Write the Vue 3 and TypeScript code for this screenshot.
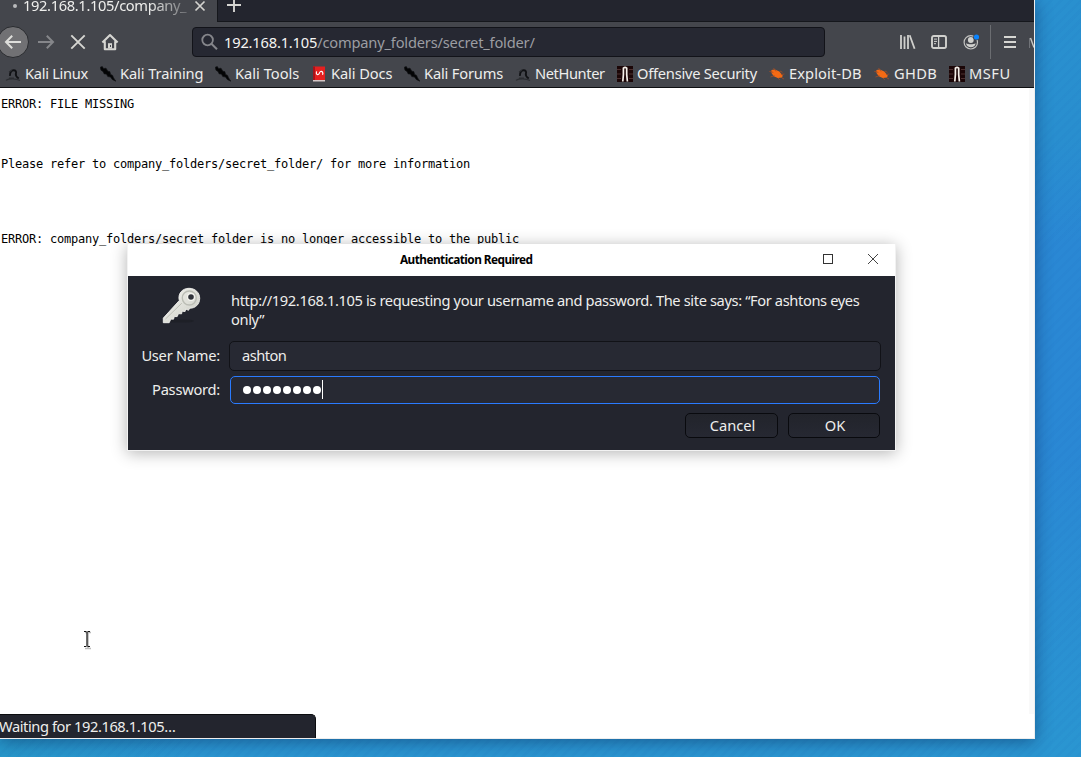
<script setup lang="ts">
interface Bookmark {
  label: string
  icon: 'dragon' | 'knife' | 'docs' | 'offsec' | 'bug'
  width: number
  tracking: number
}

const bookmarks: Bookmark[] = [
  { label: 'Kali Linux', icon: 'dragon', width: 95, tracking: -0.3 },
  { label: 'Kali Training', icon: 'knife', width: 115, tracking: -0.1 },
  { label: 'Kali Tools', icon: 'knife', width: 96, tracking: 0 },
  { label: 'Kali Docs', icon: 'docs', width: 93, tracking: -0.1 },
  { label: 'Kali Forums', icon: 'knife', width: 111, tracking: -0.18 },
  { label: 'NetHunter', icon: 'dragon', width: 102, tracking: -0.4 },
  { label: 'Offensive Security', icon: 'offsec', width: 152, tracking: -0.24 },
  { label: 'Exploit-DB', icon: 'bug', width: 105, tracking: 0.1 },
  { label: 'GHDB', icon: 'bug', width: 75, tracking: 0.3 },
  { label: 'MSFU', icon: 'offsec', width: 70, tracking: 0.5 },
]
const passwordLength = 8
</script>

<template>
  <div class="desktop">
    <div class="browser">
      <div class="tabs">
        <div class="tab">
          <span class="tab-dot"></span>
          <span class="tab-title">192.168.1.105/company_</span>
          <svg class="tab-close" width="12" height="12" viewBox="0 0 12 12"><path d="M1.5 1.5l9 9M10.5 1.5l-9 9" stroke="#d3d3cf" stroke-width="1.7" /></svg>
        </div>
        <svg class="new-tab" width="16" height="16" viewBox="0 0 16 16"><path d="M8 1v14M1 8h14" stroke="#d6d6d2" stroke-width="1.9" /></svg>
      </div>

      <div class="toolbar">
        <div class="back">
          <svg width="18" height="16" viewBox="0 0 18 16"><path d="M17 8H2M8.2 1.8L2 8l6.2 6.2" fill="none" stroke="#dededb" stroke-width="2" /></svg>
        </div>
        <svg class="forward" width="18" height="16" viewBox="0 0 18 16"><path d="M1 8h15M9.8 1.8L16 8l-6.2 6.2" fill="none" stroke="#85868a" stroke-width="2" /></svg>
        <svg class="stop" width="16" height="16" viewBox="0 0 16 16"><path d="M1.3 1.3l13.4 13.4M14.7 1.3L1.3 14.7" stroke="#d6d6d2" stroke-width="1.9" /></svg>
        <svg class="home" width="18" height="18" viewBox="0 0 18 18">
          <path d="M1.4 9.4L9 2l7.6 7.4M3.8 8.2v8h10.4v-8" fill="none" stroke="#d6d6d2" stroke-width="2.1" stroke-linejoin="round" />
          <path d="M7 15.5v-5.3h4v5.3z" fill="#d6d6d2" /><path d="M9 12h1v2H9z" fill="#44464c" />
        </svg>
        <div class="urlbar">
          <svg width="18" height="18" viewBox="0 0 18 18"><circle cx="6.6" cy="7" r="5.3" fill="none" stroke="#85868b" stroke-width="1.8" /><path d="M10.4 10.8l5.6 5.5" stroke="#85868b" stroke-width="2" /></svg>
          <span class="url">192.168.1.105<span class="path">/company_folders/secret_folder/</span></span>
        </div>
        <svg class="library" width="16" height="16" viewBox="0 0 16 16"><path d="M1 1v14M4.5 2.5V15M8 1v14M9.7 1.3l4.9 13.4" stroke="#d0d0cd" stroke-width="1.8" fill="none" /></svg>
        <svg class="sidebar" width="16" height="14" viewBox="0 0 16 14"><rect x="1" y="1" width="14" height="12" rx="1.8" fill="none" stroke="#d0d0cd" stroke-width="1.9" /><path d="M7.6 1v12" stroke="#d0d0cd" stroke-width="1.3" /><path d="M3 4.1h3M3 6.4h3M3 8.7h2" stroke="#d0d0cd" stroke-width="1" /></svg>
        <svg class="account" width="17" height="16" viewBox="0 0 17 16"><circle cx="7.8" cy="8.3" r="6.7" fill="none" stroke="#c4c4c2" stroke-width="1.2" /><circle cx="7.8" cy="6" r="2.9" fill="#d0d0cd" /><path d="M3 9.2c2 1.3 7.4 1.3 9.6 0-.2 5.5-9.2 5.5-9.6 0z" fill="#d0d0cd" /><circle cx="13.5" cy="3" r="3.3" fill="#44464c" /><circle cx="13.5" cy="3" r="2.6" fill="#0a84ff" /></svg>
        <span class="divider"></span>
        <svg class="menu" width="12" height="12" viewBox="0 0 12 12"><path d="M0 1h12M0 6h12M0 11h12" stroke="#d6d6d2" stroke-width="1.8" /></svg>
        <svg class="clipped" width="5" height="11" viewBox="0 0 5 11"><path d="M.6 11V1" stroke="#77797d" stroke-width="1" /><path d="M1.5 1L5 10.5" stroke="#c8c8c6" stroke-width="1.4" fill="none" /></svg>
      </div>

      <div class="bookmarks">
        <div v-for="b in bookmarks" :key="b.label" class="bookmark" :style="{ width: b.width + 'px' }">
          <svg width="16" height="16" viewBox="0 0 16 16">
            <g v-if="b.icon === 'dragon'" fill="none">
              <path d="M5 9.8c-.3-3 1.2-5.6 3.6-5.6 2.2 0 2.9 1.5 2.3 3.4-.5 1.7.6 3.4 2.8 5" stroke="#101114" stroke-width="1.9" />
              <path d="M4 6l3-1.8M1 14.2c3-1.8 10.5-1.8 14 .2M4 12h5" stroke="#2b2d31" stroke-width="1.1" />
            </g>
            <g v-else-if="b.icon === 'knife'">
              <path d="M.3 1.2l2-.6 1.2 2L6 2.2l1.8 3 2 .4.8 2.8 2 1 .9 2.4 2.3 3.4-3.6-1.8-1.6-2.4-2.8-.4-1.4-2.5-2.2-.2L3 5.4 1 4.2z" fill="#030405" stroke="#111216" stroke-width=".7" />
            </g>
            <g v-else-if="b.icon === 'docs'">
              <path d="M2 .5h12v13.7H2z" fill="#e52020" /><path d="M2 .5h2v13.7H2z" fill="#a5141b" /><path d="M2 14h12v1.5H2z" fill="#d5c7c7" />
              <path d="M5.6 5.4c-.9 2.6.6 3.8 2 2.9 1.2-.8.6-2.3 2-2.8 1.8-.6 2.9 1.3 1.9 3.3" fill="none" stroke="#fff" stroke-width="1.2" />
            </g>
            <g v-else-if="b.icon === 'offsec'">
              <path d="M0 0h16v16H0z" fill="#1b0607" />
              <path d="M0 3.5h4M12 3.5h4M0 8h4M12 8h4M0 12.5h4M12 12.5h4" stroke="#4d3030" stroke-width="1" />
              <path d="M5.8 15.5l.6-7V2.2c1-.9 2.3-.9 3.3 0v6.3l.7 7" fill="none" stroke="#f3eee8" stroke-width="1.7" />
            </g>
            <g v-else>
              <path d="M2.4 4l3.5-.6 4.4 2 3.4 4-.6 2-4.4.7-4-1.8-2.2-3.2z" fill="#f56a14" />
              <path d="M.3 5.4l4 1M4.5 2L7 5.4M1.5 11l4-1.4M11 5l2.5 1.3M12 8.5l3.4-.5M9 12l1.7 1.8M13 12l2 1" stroke="#a84d22" stroke-width=".8" />
            </g>
          </svg>
          <span class="bookmark-label" :style="{ letterSpacing: b.tracking + 'px' }">{{ b.label }}</span>
        </div>
      </div>

      <div class="page">
        <p class="missing">ERROR: FILE MISSING</p>
        <p class="refer">Please refer to company_folders/secret_folder/ for more information</p>
        <p class="denied">ERROR: company_folders/secret_folder is no longer accessible to the public</p>
      </div>
      <div class="status"><span>Waiting for 192.168.1.105…</span></div>
    </div>

    <div class="dialog">
      <div class="titlebar">
        <strong>Authentication Required</strong>
        <svg class="maximize" width="10" height="10" viewBox="0 0 10 10"><rect x=".5" y=".5" width="9" height="9" fill="none" stroke="#333" /></svg>
        <svg class="close" width="10" height="10" viewBox="0 0 10 10"><path d="M0 0l10 10M10 0L0 10" stroke="#444" stroke-width="1" /></svg>
      </div>
      <div class="dialog-body">
        <div class="message-row">
          <svg class="key" width="40" height="38" viewBox="0 0 40 38">
            <defs><linearGradient id="metal" x1="0" y1="0" x2="1" y2="1"><stop offset="0" stop-color="#f2f2ef" /><stop offset=".55" stop-color="#dedfd8" /><stop offset="1" stop-color="#c4c5bd" /></linearGradient></defs>
            <ellipse cx="18" cy="35" rx="14" ry="1.6" fill="#1e2027" />
            <path d="M17.3 14.5C15.5 7.5 20.5 2.3 27 2.3c6.3 0 10.7 4.5 10.7 10 0 6-4.6 10.2-10 9.9l-1.2 2.1-2.8-1.3-.6 2.5-3-.3-.5 2.6-3.2-.1-1.2 2.9-2.9-.1-.8 2.7-2.7-.1-1.6 3.6H1.3v-4.6z" fill="url(#metal)" stroke="#f1f1ed" stroke-width=".9" />
            <path d="M3.5 33L19.8 17.2" fill="none" stroke="#b2b4ab" stroke-width=".8" />
            <circle cx="27.3" cy="12" r="7" fill="none" stroke="#bbbdb5" stroke-width="1.4" />
            <circle cx="29" cy="11" r="3.9" fill="#f6f6f1" /><circle cx="29" cy="11" r="2.8" fill="#30333a" />
          </svg>
          <div class="message">http://192.168.1.105 is requesting your username and password. The site says: “For ashtons eyes<br />only”</div>
        </div>
        <div class="field-row user">
          <span class="field-label">User Name:</span>
          <div class="field"><span class="value">ashton</span></div>
        </div>
        <div class="field-row password">
          <span class="field-label">Password:</span>
          <div class="field focused"><i v-for="n in passwordLength" :key="n" class="dot"></i><i class="caret"></i></div>
        </div>
        <div class="actions">
          <button>Cancel</button>
          <button class="ok">OK</button>
        </div>
      </div>
    </div>

    <svg class="cursor" width="9" height="20" viewBox="0 0 9 20">
      <path d="M2 2.5h6M5 3v15M2 18.5h6" stroke="#bbb" stroke-width="1.6" fill="none" />
      <path d="M1 1.5h2.5M4.5 1.5H7M4 2v14M1 16.5h2.5M4.5 16.5H7" stroke="#111" stroke-width="1.2" fill="none" />
    </svg>
  </div>
</template>

<style>
body { margin: 0; overflow: hidden; }
</style>

<style scoped>
* { box-sizing: border-box; }
.desktop { position: relative; width: 1081px; height: 757px; overflow: hidden; font: 14.67px/20px "Noto Sans", sans-serif; color: #eeeeec; background: repeating-linear-gradient(135deg, rgba(20,75,170,.04) 0 3px, transparent 3px 7px), linear-gradient(90deg, #2797ca 0, rgba(40,145,208,0) 18%), linear-gradient(#2990cf 0, #298fcf 18%, #2a88d4 32%, #2a88d4 60%, #2a8fd2 80%, #2a96d1 100%); }
.browser { width: 1035px; height: 739px; display: flex; flex-direction: column; background: #fff; border-right: 1px solid #eee; border-bottom: 1px solid #eee; box-shadow: 0 3px 16px rgba(0,20,65,.42); overflow: hidden; }
.tabs { height: 22px; flex: none; display: flex; background: #23252e; }
.tab { width: 218px; height: 22px; display: flex; background: #44464c; border-right: 1px solid #15171c; }
.new-tab { margin: -3px 0 0 8px; }
.tabs::after { content: ""; flex: 1; align-self: flex-end; height: 1px; margin-left: -24px; background: #15171c; }
.tab-dot { width: 4px; height: 4px; margin: 4px 0 0 13px; border-radius: 50%; background: #b9babc; }
.tab-title { width: 164px; margin: -5px 0 0 6px; white-space: nowrap; letter-spacing: -.35px; -webkit-mask-image: linear-gradient(90deg, #000 125px, rgba(0,0,0,.25) 164px); mask-image: linear-gradient(90deg, #000 125px, rgba(0,0,0,.25) 164px); }
.tab-close { margin: 0 0 0 7px; }
.toolbar { height: 40px; flex: none; display: flex; align-items: center; background: #44464c; white-space: nowrap; }
.toolbar > * { flex: none; }
.back { width: 32px; height: 32px; margin-left: -3px; border: 1px solid #292b2f; border-radius: 50%; background: #717174; display: flex; align-items: center; justify-content: center; }
.forward { margin-left: 8px; }
.stop { margin-left: 15px; }
.home { margin-left: 15px; }
.urlbar { width: 633px; height: 30px; margin-left: 73px; padding-left: 8px; border: 1px solid #121319; border-radius: 4px; background: #262832; display: flex; align-items: center; }
.url { margin-left: 5px; color: #f5f5f3; letter-spacing: -.19px; }
.path { color: #9c9da2; }
.library { margin-left: 75px; }
.sidebar { margin-left: 15px; }
.account { margin-left: 16px; }
.divider { width: 1px; height: 34px; margin-left: 10px; background: #6b6d71; }
.menu { margin-left: 13px; }
.clipped { margin-left: 13px; }
.bookmarks { height: 26px; flex: none; padding-left: 5px; display: flex; background: #44464c; border-bottom: 1px solid #0e0f12; }
.bookmark { flex: none; display: flex; align-items: center; white-space: nowrap; gap: 4px; }
.bookmark svg { flex: none; margin-top: -1px; }
.bookmark-label { margin-top: -4px; }
.page { flex: 1; padding: 9px 0 0 1px; border-right: 5px solid #f9f9f9; color: #000; font: 12px/15px "DejaVu Sans Mono", monospace; letter-spacing: -.224px; white-space: nowrap; }
.page p { margin: 0; }
.page .refer { margin-top: 45px; }
.page .denied { margin-top: 60px; }
.status { width: 316px; height: 24px; flex: none; border: 1px solid #0b0c0f; border-left: 0; border-bottom: 0; border-radius: 0 5px 0 0; background: #23252e; line-height: 23px; white-space: nowrap; letter-spacing: -.42px; }
.status span { margin-left: -1px; }
.dialog { position: absolute; left: 127px; top: 244px; width: 769px; height: 207px; border: 1px solid #f2f2f2; border-top: 0; background: #fff; box-shadow: 0 2px 15px rgba(0,0,0,.3); }
.titlebar { height: 32px; padding-left: 272px; display: flex; align-items: center; color: #000; background: #fff; }
.titlebar strong { width: 133px; margin-top: -2px; font-size: 11.8px; letter-spacing: -.54px; white-space: nowrap; }
.maximize { width: 10px; margin: -2px 0 0 290px; }
.close { margin: -2px 0 0 35px; }
.dialog-body { height: 174px; padding: 10px 14px 12px; background: #23252e; }
.message-row { height: 55px; display: flex; }
.key { flex: none; margin-left: 20px; }
.message { margin: 5px 0 0 29px; line-height: 19px; letter-spacing: -.38px; white-space: nowrap; }
.field-row { display: flex; align-items: center; }
.field-label { width: 78px; margin-top: -2px; white-space: nowrap; display: flex; justify-content: flex-end; letter-spacing: -.25px; }
.field { width: 652px; height: 30px; margin-left: 9px; padding: 0 0 2px 12px; border: 1px solid #111217; border-radius: 5px; background: #272933; display: flex; align-items: center; }
.value { letter-spacing: -.55px; }
.field.focused { width: 650px; height: 28px; margin-left: 10px; padding-bottom: 1px; border-color: #2a7bff; }
.password { margin-top: 5px; }
.dot { width: 8px; height: 8px; margin-right: 2px; border-radius: 50%; background: #fff; }
.caret { width: 1px; height: 19px; margin-left: -1px; background: #fff; }
.actions { display: flex; justify-content: flex-end; margin-top: 9px; gap: 10px; padding-right: 1px; }
button { width: 93px; height: 25px; padding: 0 0 1px 2px; border: 1px solid #090a0e; border-radius: 5px; background: linear-gradient(#22242b, #262832); color: #eeeeec; font: inherit; }
button.ok { width: 92px; }
.cursor { position: absolute; left: 83px; top: 630px; }
</style>
